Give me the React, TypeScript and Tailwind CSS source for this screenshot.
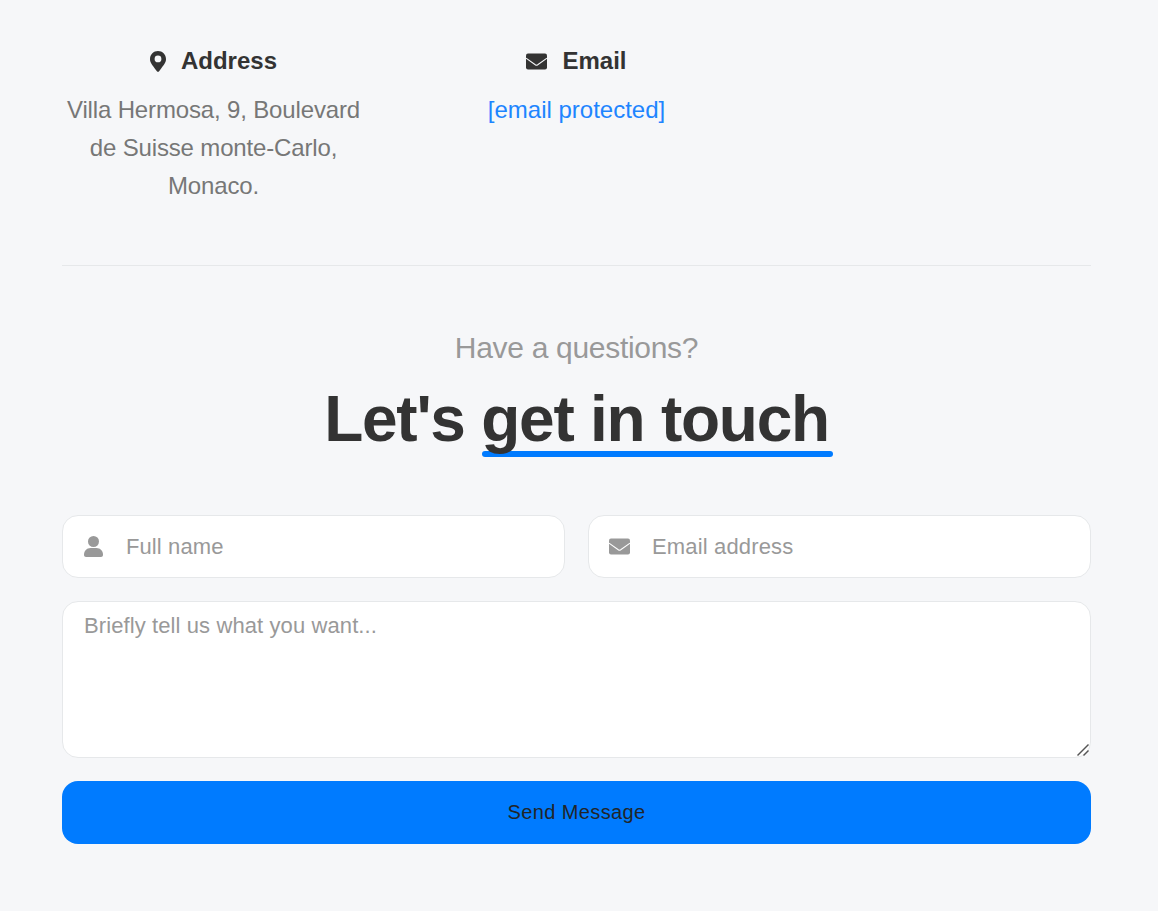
import React from "react";

const font = "font-['Liberation_Sans',Arial,sans-serif]";

function PinIcon() {
  return (
    <svg className="h-[21px] w-[16px] shrink-0" viewBox="0 0 16 21">
      <path
        fillRule="evenodd"
        fill="currentColor"
        d="M8 0C3.6 0 0 3.5 0 7.9c0 3.2 1.2 4.6 6.9 12.4.5.7 1.7.7 2.2 0C14.800 12.500 16 11.100 16 7.900 16 3.500 12.400 0 8 0Zm0 11.300a3.400 3.400 0 1 1 0-6.800 3.400 3.400 0 0 1 0 6.800Z"
      />
    </svg>
  );
}

function MailIcon({ flap }: { flap: string }) {
  return (
    <svg className="h-[17px] w-[21px] shrink-0" viewBox="0 0 21 17">
      <rect x="0" y="0.5" width="21" height="16" rx="2" fill="currentColor" />
      <path d="M0 5.200 L9.300 11.800 Q10.500 12.600 11.700 11.800 L21 5.200" fill="none" stroke={flap} strokeWidth="1.100" />
    </svg>
  );
}

function UserIcon() {
  return (
    <svg className="h-[21px] w-[19px] shrink-0" viewBox="0 0 19 21" fill="currentColor">
      <circle cx="9.500" cy="5.500" r="5.500" />
      <path d="M6.500 12h6c3.600 0 6.500 2.900 6.500 6.500v.5c0 1.100-.9 2-2 2H2c-1.100 0-2-.9-2-2v-.5C0 14.900 2.900 12 6.500 12Z" />
    </svg>
  );
}

export default function App() {
  return (
    <div className={`${font} min-h-[911px] bg-[#f6f7f9] pl-[62px] pr-[67px] pt-[44px] text-[24px]`}>
      {/* Contact info */}
      <div className="grid grid-cols-3 gap-[60px] border-b border-[#e6e8ea] pb-[60px]">
        <div className="text-center">
          <h4 className="flex items-center justify-center gap-[15px] text-[24px] leading-[34px] font-bold text-[#333]">
            <PinIcon />
            Address
          </h4>
          <p className="mt-[13px] text-[24px] leading-[38px] tracking-[-0.15px] text-[#777]">
            Villa Hermosa, 9, Boulevard de Suisse monte-Carlo, Monaco.
          </p>
        </div>
        <div className="text-center">
          <h4 className="flex items-center justify-center gap-[15px] text-[24px] leading-[34px] font-bold text-[#333]">
            <MailIcon flap="#f6f7f9" />
            Email
          </h4>
          <p className="mt-[13px] text-[24px] leading-[38px]">
            <a href="#" className="text-[#1e85ff]">[email protected]</a>
          </p>
        </div>
      </div>

      {/* Heading */}
      <div className="mt-[62px] text-center">
        <p className="text-[30px] leading-[40px] tracking-[-0.3px] text-[#999]">Have a questions?</p>
        <h2 className="mt-[13px] text-[64px] leading-[76px] font-bold tracking-[-1.25px] text-[#333]">
          Let's{" "}
          <span className="relative isolate inline-block">
            get in touch
            <span className="absolute -z-10 left-[1px] -right-[4px] bottom-0 h-[6px] rounded-full bg-[#007bff]" />
          </span>
        </h2>
      </div>

      {/* Form */}
      <form className="mt-[58px] flex flex-col gap-[23px]">
        <div className="grid grid-cols-2 gap-[23px]">
          <label className="flex h-[63px] items-center rounded-[16px] border border-[#e6e8ea] bg-white pl-[21px] pr-4 text-[#999]">
            <UserIcon />
            <input placeholder="Full name" className="ml-[23px] w-full bg-transparent text-[22px] tracking-[0.1px] outline-none placeholder:text-[#999]" />
          </label>
          <label className="flex h-[63px] items-center rounded-[16px] border border-[#e6e8ea] bg-white pl-[20px] pr-4 text-[#999]">
            <MailIcon flap="#ffffff" />
            <input placeholder="Email address" className="ml-[22px] w-full bg-transparent text-[22px] tracking-[0.15px] outline-none placeholder:text-[#999]" />
          </label>
        </div>
        <div className="relative">
          <textarea
            placeholder="Briefly tell us what you want..."
            className="block h-[157px] w-full resize-none rounded-[16px] border border-[#e6e8ea] bg-white px-[21px] py-[9px] text-[22px] leading-[30px] tracking-[0.1px] outline-none placeholder:text-[#999]"
          />
          {/* resize grip */}
          <svg className="pointer-events-none absolute right-[2px] bottom-[2px] h-[12px] w-[12px]" viewBox="0 0 12 12" fill="none" stroke="#555" strokeWidth="1.4">
            <path d="M0.5 11.5 L11.5 0.5" />
            <path d="M6.5 11.5 L11.5 6.5" />
          </svg>
        </div>
        <button type="button" className="h-[63px] rounded-[16px] bg-[#007bff] pb-[2px] text-[20px] tracking-[0.4px] text-[#212529]">
          Send Message
        </button>
      </form>
    </div>
  );
}
